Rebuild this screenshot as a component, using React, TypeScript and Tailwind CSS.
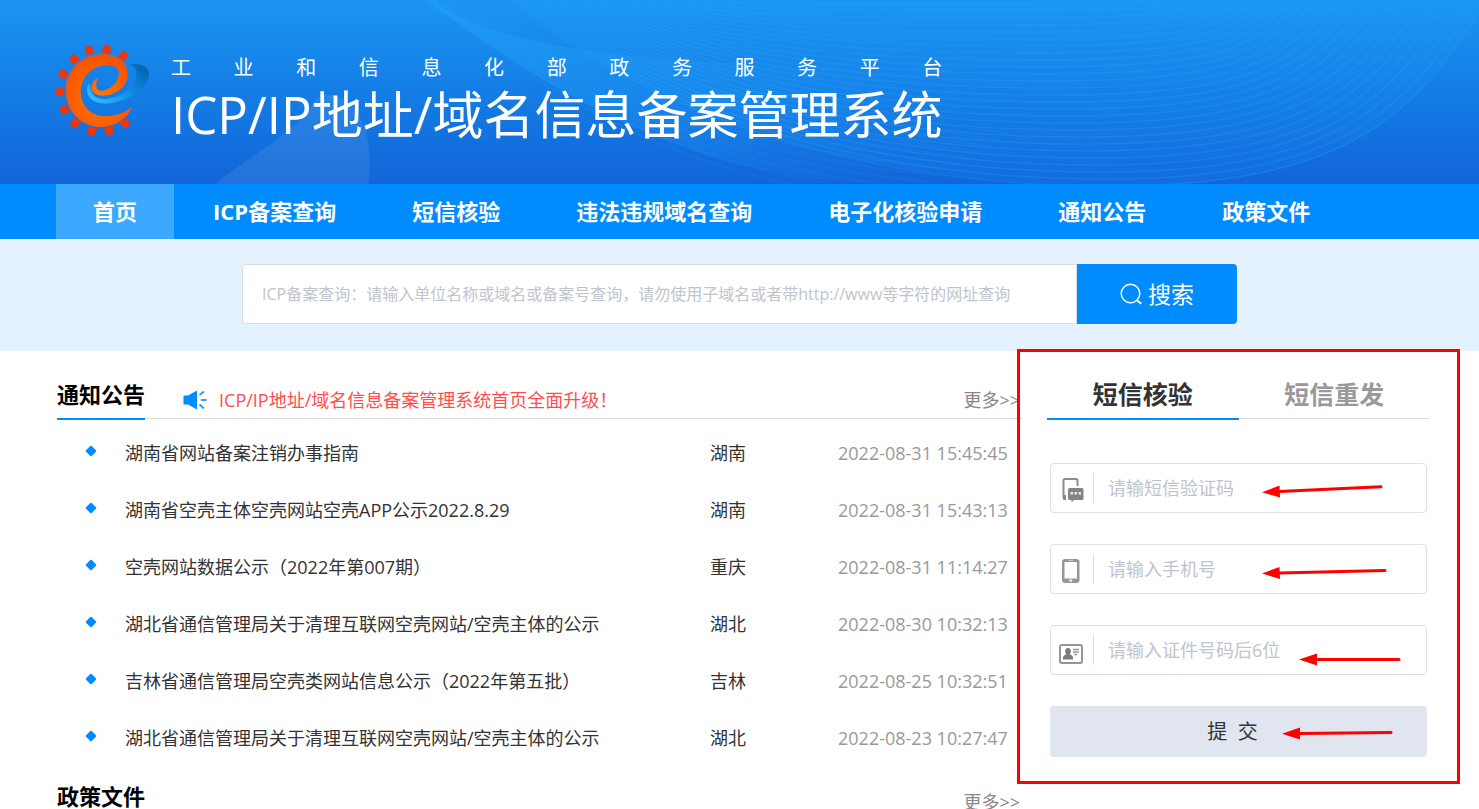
import { ReactNode, useState } from "react";

type Notice = {
  title: string,
  region: string,
  date: string,
}

interface FieldProps {
  id: string,
  placeholder: string,
  icon: ReactNode,
}

const menu = ["首页", "ICP备案查询", "短信核验", "违法违规域名查询", "电子化核验申请", "通知公告", "政策文件"];

const notices: Notice[] = [
  { title: "湖南省网站备案注销办事指南", region: "湖南", date: "2022-08-31 15:45:45" },
  { title: "湖南省空壳主体空壳网站空壳APP公示2022.8.29", region: "湖南", date: "2022-08-31 15:43:13" },
  { title: "空壳网站数据公示（2022年第007期）", region: "重庆", date: "2022-08-31 11:14:27" },
  { title: "湖北省通信管理局关于清理互联网空壳网站/空壳主体的公示", region: "湖北", date: "2022-08-30 10:32:13" },
  { title: "吉林省通信管理局空壳类网站信息公示（2022年第五批）", region: "吉林", date: "2022-08-25 10:32:51" },
  { title: "湖北省通信管理局关于清理互联网空壳网站/空壳主体的公示", region: "湖北", date: "2022-08-23 10:27:47" },
];

// x, y of each gear tooth around the "e"
const teeth = [
  [147, 59], [200, 56], [250, 76], [102, 86], [69, 131], [60, 184],
  [73, 238], [105, 278], [155, 303], [207, 301], [256, 279],
];

const waves = Array.from({ length: 27 }, (_, i) => i);

function Logo() {
  return (
    <svg viewBox="45 40 285 280" className="h-[93px] w-[95px] shrink-0" aria-hidden="true">
      <defs>
        <radialGradient id="flame" cx="0.5" cy="0.6" r="0.6">
          <stop offset="0" stopColor="#ff7a00" />
          <stop offset="1" stopColor="#fa5000" />
        </radialGradient>
        <linearGradient id="swoosh" x1="0" y1="0.8" x2="1" y2="0.2">
          <stop offset="0" stopColor="#35bbff" />
          <stop offset="0.45" stopColor="#0f97ec" />
          <stop offset="1" stopColor="#0664b4" />
        </linearGradient>
      </defs>
      {teeth.map(([x, y]) => (
        <polygon
          key={`${x}-${y}`}
          points="-10,-13 10,-13 14,12 -14,12"
          fill="#ee350c"
          transform={`translate(${x} ${y}) rotate(${(Math.atan2(y - 180, x - 182) * 180) / Math.PI + 90})`}
        />
      ))}
      <path
        d="M270 101C310 96 329 112 327 136C322 172 272 205 224 216C182 225 150 213 143 190C139 176 142 166 149 157C148 186 162 205 190 206C236 206 276 176 288 148C294 126 288 109 270 101Z"
        fill="url(#swoosh)"
      />
      <path
        d="M277 228C262 265 225 290 180 290C120 288 77 240 77 180C77 120 122 71 187 71C235 71 263 98 263 132C263 168 228 195 190 196C165 196 152 183 154 168C156 156 164 146 174 142C166 158 166 178 180 181C205 182 236 158 237 130C238 110 220 104 200 104C150 106 122 145 122 185C124 230 155 258 197 257C230 257 258 245 277 228Z"
        fill="url(#flame)"
      />
    </svg>
  );
}

function HeaderWaves() {
  return (
    <svg viewBox="0 0 1479 184" preserveAspectRatio="none" className="absolute inset-0 h-full w-full" aria-hidden="true">
      <defs>
        <linearGradient id="band" x1="0" x2="1" y1="0" y2="0">
          <stop offset="0" stopColor="#22a8ff" stopOpacity="0.4" />
          <stop offset="1" stopColor="#22a8ff" stopOpacity="0" />
        </linearGradient>
      </defs>
      <path d="M215 184C270 142 300 128 313 103C318 92 336 92 349 103C366 120 374 150 368 184Z" fill="#fff" opacity="0.08" />
      <path d="M420 -5C500 50 620 62 900 70V184C700 184 560 100 420 -5Z" fill="url(#band)" />
      <path d="M505 -5C640 110 850 184 1110 186S1420 100 1492 -5Z" fill="#1ea4ff" opacity="0.12" />
      {waves.map((i) => (
        <path
          key={i}
          d={`M${505 + i * 5} -5C${640 + i * 2} ${110 - i * 4} ${850 - i * 2} ${186 - i * 7} ${1110 - i * 4} ${186 - i * 7}S${1420 - i * 10} ${100 - i * 4} ${1492 - i * 10} -5`}
          fill="none"
          stroke="#2ca8f8"
          strokeWidth="1.5"
          opacity="0.24"
        />
      ))}
      {waves.slice(0, 12).map((i) => (
        <path
          key={`left-${i}`}
          d={`M420 -5C${550 + i * 2} ${96 - i * 4} ${680 + i * 4} ${182 - i * 8} ${900 + i * 10} ${200 - i * 6}`}
          fill="none"
          stroke="#2ca8f8"
          strokeWidth="1"
          opacity="0.16"
        />
      ))}
    </svg>
  );
}

function SmsIcon() {
  return (
    <svg viewBox="0 0 22 26" className="mt-1 h-[26px] w-[22px]" aria-hidden="true">
      <path d="M15.5 9V3.5Q15.5 2 14 2H3Q1.5 2 1.5 3.5V21" fill="none" stroke="#8c8c8c" strokeWidth="2" />
      <path d="M1 18H4V23H2.5Q1 23 1 21.5Z" fill="#888" />
      <path d="M7.5 11H20Q21.5 11 21.5 12.5V21.5Q21.5 23 20 23H12L9.5 25.5V23H7.5Q6 23 6 21.5V12.5Q6 11 7.5 11Z" fill="#858585" />
      <path d="M8.5 15H11V17.5H8.5ZM12.5 15H15V17.5H12.5ZM16.5 15H19V17.5H16.5Z" fill="#e8e8e8" />
    </svg>
  );
}

function PhoneIcon() {
  return (
    <svg viewBox="0 0 22 26" className="mt-1 -ml-px h-[26px] w-[22px]" aria-hidden="true">
      <rect x="1" y="1" width="17.5" height="24" rx="3" fill="#979797" />
      <rect x="3.5" y="4" width="12.5" height="16.5" rx="0.5" fill="#fff" />
      <rect x="7.5" y="2" width="4.5" height="1" fill="#ccc" />
      <rect x="8.2" y="21.3" width="3" height="2.5" rx="1" fill="#eee" />
    </svg>
  );
}

function CardIcon() {
  return (
    <svg viewBox="0 0 24 20" className="mt-2 -ml-[3px] h-5 w-6" aria-hidden="true">
      <rect x="1" y="1" width="22" height="18" rx="2" fill="#fff" stroke="#969696" strokeWidth="2" />
      <path d="M9 4A2.8 3.3 0 0 1 10.8 10Q13.5 11.5 14 13V15.5H4V13Q4.5 11.5 7.2 10A2.8 3.3 0 0 1 9 4Z" fill="#7c7c7c" />
      <path d="M14 5.5H20M14 8H20M15 10.5H18" stroke="#999" strokeWidth="1.3" />
    </svg>
  );
}

function Field({ id, placeholder, icon }: FieldProps) {
  return (
    <div className="flex h-[50px] items-center rounded border border-[#dcdfe6] bg-white">
      <label htmlFor={id} className="flex h-[30px] w-[43px] shrink-0 items-center border-r border-[#dcdfe6] pl-[11px]">
        {icon}
      </label>
      <input
        id={id}
        type="text"
        aria-label={placeholder}
        placeholder={placeholder}
        className="h-full w-full min-w-0 pl-3.5 text-[18px] outline-none placeholder:text-[#c0c4cc]"
      />
    </div>
  );
}

function SectionHeader({ title, children }: { title: string, children?: ReactNode }) {
  return (
    <div className="flex h-12 border-b border-[#dcdcdc]">
      <h2 className="h-[49px] shrink-0 border-b-2 border-[#008cff] text-[22px] leading-[47px] font-bold text-black">{title}</h2>
      <div className="flex flex-1 items-center pt-[11px] pr-0.5 pl-[38px] text-[18px]">
        {children}
        <a href="#" className="ml-auto text-[#888]">更多&gt;&gt;</a>
      </div>
    </div>
  );
}

function Annotations() {
  return (
    <div className="pointer-events-none absolute -inset-x-[30px] -top-0.5 bottom-0 border-[3px] border-[#ff0000]">
      <svg viewBox="3 3 437 429" className="h-[429px] w-[437px]" fill="#ff0000" stroke="#ff0000" strokeLinecap="round" aria-hidden="true">
        <g strokeWidth="3">
          <path d="M262 142.5L364 137.7" />
          <path d="M262 224L368 221.5" />
          <path d="M299 310.5L382 310.5" />
          <path d="M282 384.5L374 383.5" />
        </g>
        <g stroke="none">
          <path d="M245 143.3L262.5 136.5L263 148.5Z" />
          <path d="M245 224.5L262.5 218L263 230Z" />
          <path d="M282 310.5L300 304.5V316.5Z" />
          <path d="M265 384.7L283 378.5V390.5Z" />
        </g>
      </svg>
    </div>
  );
}

export default function App() {
  const [active, setActive] = useState(0);
  const [tab, setTab] = useState(0);

  return (
    <div className="min-h-screen bg-white font-['Open_Sans','Noto_Sans_CJK_SC',sans-serif] text-[#333]">
      <header className="relative bg-linear-to-b from-[#1b95f2] to-[#1265d8]">
        <HeaderWaves />
        <div className="relative flex h-[184px] gap-[21px] pt-11 pl-[55px] text-white">
          <Logo />
          <div className="flex flex-col pt-2">
            <p className="flex justify-between text-[20px] leading-8">
              {"工业和信息化部政务服务平台".split("").map((char, i) => <span key={i}>{char}</span>)}
            </p>
            <h1 className="text-[51px] leading-[60px] whitespace-nowrap">ICP/IP地址/域名信息备案管理系统</h1>
          </div>
        </div>
      </header>

      <nav className="flex gap-0.5 bg-[#008cff] pl-14">
        {menu.map((item, i) => (
          <a
            key={item}
            href="#"
            onClick={() => setActive(i)}
            className={`px-[37px] text-[22px] leading-[55px] font-bold whitespace-nowrap text-white ${active === i ? "bg-[#3da8ff]" : ""}`}
          >
            {item}
          </a>
        ))}
      </nav>

      <div className="bg-[#e4f2ff] px-14 pt-[25px] pb-[27px]">
        <form className="mx-auto flex h-[60px] max-w-[995px]" onSubmit={(e) => e.preventDefault()}>
          <input
            type="text"
            aria-label="ICP备案查询"
            placeholder="ICP备案查询：请输入单位名称或域名或备案号查询，请勿使用子域名或者带http://www等字符的网址查询"
            className="min-w-0 flex-1 rounded-l border border-[#dcdcdc] bg-white pl-[19px] text-[16px] outline-none placeholder:text-[#c0c4cc]"
          />
          <button type="submit" className="flex w-40 items-center justify-center gap-1.5 rounded-r bg-[#008cff] text-[23px] text-white">
            <svg viewBox="0 0 22 22" className="size-[22px]" fill="none" stroke="currentColor" strokeWidth="1.5" aria-hidden="true">
              <circle cx="10.5" cy="10.5" r="9.3" />
              <path d="M16.5 17L21.3 20.8" strokeWidth="2" />
            </svg>
            搜索
          </button>
        </form>
      </div>

      <main className="flex gap-[25px] pr-[49px] pl-[57px]">
        <div className="min-w-0 flex-1 pt-5">
          <SectionHeader title="通知公告">
            <svg viewBox="0 0 24 20" className="mr-3 h-5 w-6 shrink-0" aria-hidden="true">
              <path d="M1 5.5H5L14 0.5V19.5L5 14.5H1Q0.5 14.5 0.5 14V6Q0.5 5.5 1 5.5Z" fill="#008cff" />
              <path d="M16.5 5L21 1.5M18 10H23.5M16.5 14.5L21 18.5" stroke="#2f9dfb" strokeWidth="2" />
            </svg>
            <a href="#" className="text-[#ff4d4d]">ICP/IP地址/域名信息备案管理系统首页全面升级！</a>
          </SectionHeader>
          <table className="my-1.5 w-full table-fixed text-left text-[18px]">
            <tbody>
              {notices.map((notice, i) => (
                <tr key={i} className="h-[57px]">
                  <td className="w-[68px] pl-7">
                    <svg viewBox="0 0 12 12" className="mb-1.5 size-3" aria-hidden="true">
                      <rect x="2" y="2" width="8" height="8" rx="1" fill="#008cff" transform="rotate(45 6 6)" />
                    </svg>
                  </td>
                  <td><a href="#">{notice.title}</a></td>
                  <td className="w-[128px]">{notice.region}</td>
                  <td className="w-[184px] text-[#999]">{notice.date}</td>
                </tr>
              ))}
            </tbody>
          </table>
          <SectionHeader title="政策文件" />
        </div>

        <aside className="relative w-[383px] shrink-0 self-start pt-5 pb-[27px]">
          <div className="flex h-12 border-b border-[#dcdcdc]">
            {["短信核验", "短信重发"].map((item, i) => (
              <button
                key={item}
                type="button"
                onClick={() => setTab(i)}
                className={`h-[49px] flex-1 border-b-2 text-[25px] font-bold ${tab === i ? "border-[#008cff] text-[#333]" : "border-transparent text-[#999]"}`}
              >
                {item}
              </button>
            ))}
          </div>
          <form className="mt-11 flex flex-col gap-[31px] px-[3px]" onSubmit={(e) => e.preventDefault()}>
            <Field id="code" placeholder="请输短信验证码" icon={<SmsIcon />} />
            <Field id="phone" placeholder="请输入手机号" icon={<PhoneIcon />} />
            <Field id="card" placeholder="请输入证件号码后6位" icon={<CardIcon />} />
            <button type="submit" className="h-[51px] rounded bg-[#e0e5f0] pr-3 text-[20px] whitespace-pre text-[#333]">提  交</button>
          </form>
          <Annotations />
        </aside>
      </main>
    </div>
  );
}
